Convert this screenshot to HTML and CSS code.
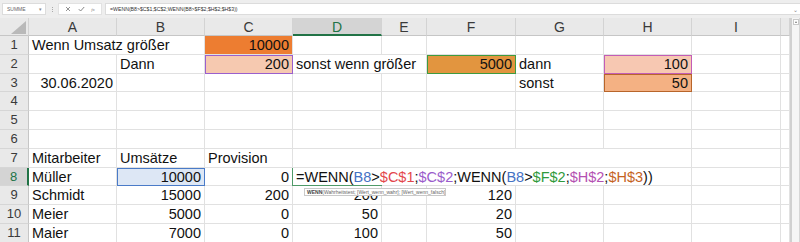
FILE: index.html
```html
<!DOCTYPE html>
<html lang="de">
<head>
<meta charset="utf-8">
<title>Excel WENN</title>
<link rel="stylesheet" href="styles.css">
</head>
<body>
<div class="app">
  <div class="fbar">
    <div class="namebox"><span>SUMME</span><span class="dd">&#9662;</span></div>
    <div class="sep"><i></i><i></i><i></i></div>
    <div class="icons">
      <svg class="ic" width="6" height="6" viewBox="0 0 6 6"><path d="M1 1L5 5M5 1L1 5" stroke="#777" stroke-width="0.8" fill="none"/></svg>
      <svg class="ic" width="7" height="6" viewBox="0 0 7 6"><path d="M0.8 3.2L2.6 5L6.2 1" stroke="#777" stroke-width="0.9" fill="none"/></svg>
      <span class="fx">fx</span>
    </div>
    <div class="formula"><span>=WENN(B8&gt;$C$1;$C$2;WENN(B8&gt;$F$2;$H$2;$H$3))</span><span class="exp">&#8964;</span></div>
  </div>
  <div class="main">
    <div class="sheet">
      <div class="ch corner"></div><div class="ch">A</div><div class="ch">B</div><div class="ch">C</div><div class="ch sel">D</div><div class="ch">E</div><div class="ch">F</div><div class="ch">G</div><div class="ch">H</div><div class="ch">I</div><div class="ch"></div>

      <div class="rh">1</div><div class="c s2">Wenn Umsatz größer</div><div class="c n f-c1">10000</div><div class="c"></div><div class="c"></div><div class="c"></div><div class="c"></div><div class="c"></div><div class="c"></div><div class="c"></div>

      <div class="rh">2</div><div class="c"></div><div class="c">Dann</div><div class="c n f-c2">200</div><div class="c s2">sonst wenn größer</div><div class="c n f-f2">5000</div><div class="c">dann</div><div class="c n f-h2">100</div><div class="c"></div><div class="c"></div>

      <div class="rh">3</div><div class="c n">30.06.2020</div><div class="c"></div><div class="c"></div><div class="c"></div><div class="c"></div><div class="c"></div><div class="c">sonst</div><div class="c n f-h3">50</div><div class="c"></div><div class="c"></div>

      <div class="rh">4</div><div class="c"></div><div class="c"></div><div class="c"></div><div class="c"></div><div class="c"></div><div class="c"></div><div class="c"></div><div class="c"></div><div class="c"></div><div class="c"></div>

      <div class="rh">5</div><div class="c"></div><div class="c"></div><div class="c"></div><div class="c"></div><div class="c"></div><div class="c"></div><div class="c"></div><div class="c"></div><div class="c"></div><div class="c"></div>

      <div class="rh">6</div><div class="c"></div><div class="c"></div><div class="c"></div><div class="c"></div><div class="c"></div><div class="c"></div><div class="c"></div><div class="c"></div><div class="c"></div><div class="c"></div>

      <div class="rh">7</div><div class="c">Mitarbeiter</div><div class="c">Umsätze</div><div class="c">Provision</div><div class="c s5"></div><div class="c"></div><div class="c"></div>

      <div class="rh sel">8</div><div class="c">Müller</div><div class="c n f-b8">10000</div><div class="c n">0</div><div class="c s5 edit">=WENN(<span class="r-b8">B8</span>&gt;<span class="r-c1">$C$1</span>;<span class="r-c2">$C$2</span>;WENN(<span class="r-b8">B8</span>&gt;<span class="r-f2">$F$2</span>;<span class="r-h2">$H$2</span>;<span class="r-h3">$H$3</span>))<div class="tip"><b>WENN</b>(Wahrheitstest; [Wert_wenn_wahr]; [Wert_wenn_falsch])</div></div><div class="c"></div><div class="c"></div>

      <div class="rh">9</div><div class="c">Schmidt</div><div class="c n">15000</div><div class="c n">200</div><div class="c n">200</div><div class="c"></div><div class="c n">120</div><div class="c"></div><div class="c"></div><div class="c"></div><div class="c"></div>

      <div class="rh">10</div><div class="c">Meier</div><div class="c n">5000</div><div class="c n">0</div><div class="c n">50</div><div class="c"></div><div class="c n">20</div><div class="c"></div><div class="c"></div><div class="c"></div><div class="c"></div>

      <div class="rh">11</div><div class="c">Maier</div><div class="c n">7000</div><div class="c n">0</div><div class="c n">100</div><div class="c"></div><div class="c n">50</div><div class="c"></div><div class="c"></div><div class="c"></div><div class="c"></div>
    </div>
    <div class="vscroll"><div class="up"></div></div>
  </div>
</div>
</body>
</html>
```
FILE: styles.css
```css
* { box-sizing: border-box; }
body {
  margin: 0;
  background: #fff;
  font-family: "Liberation Sans", Arial, sans-serif;
  overflow: hidden;
}
.app { width: 800px; height: 242px; overflow: hidden; }

/* formula bar */
.fbar {
  height: 18px;
  background: #eeeeee;
  display: flex;
  align-items: flex-start;
  padding: 3px 0 0 2px;
}
.namebox {
  width: 44px;
  height: 12px;
  background: #fff;
  border: 1px solid #dcdcdc;
  display: flex;
  align-items: center;
  justify-content: space-between;
  padding: 0 3px 0 4px;
  font-size: 5px;
  color: #666;
}
.namebox .dd { font-size: 5px; color: #888; }
.sep {
  width: 12px;
  height: 12px;
  display: flex;
  flex-direction: column;
  align-items: center;
  justify-content: center;
  gap: 1px;
}
.sep i { display: block; width: 1px; height: 1px; background: #aaa; }
.icons {
  width: 44px;
  height: 12px;
  background: #fff;
  border: 1px solid #e2e2e2;
  display: flex;
  align-items: center;
  justify-content: space-around;
  padding: 0 3px;
}
.fx { font-size: 5px; font-style: italic; color: #888; font-family: "Liberation Serif", serif; }
.formula {
  flex: 1;
  margin-left: 3px;
  height: 12px;
  background: #fff;
  border: 1px solid #dcdcdc;
  border-right: none;
  display: flex;
  justify-content: space-between;
  align-items: center;
  padding: 0 2px 0 4px;
  font-size: 5.2px;
  color: #333;
  white-space: nowrap;
}
.formula .exp { font-size: 6px; color: #888; }

/* sheet */
.main { display: flex; height: 224px; }
.sheet {
  width: 790px;
  display: grid;
  grid-template-columns: 29px 88px 88px 88px 89px 45px 89px 88px 88px 89px 9px;
  grid-template-rows: 18px repeat(11, 18.8px);
}
.c {
  border-right: 1px solid #e1e1e1;
  border-bottom: 1px solid #e1e1e1;
  font-size: 14.5px;
  line-height: 18px;
  padding: 0 3px;
  white-space: nowrap;
  overflow: hidden;
  color: #111;
}
.n { text-align: right; }
.s2 { grid-column: span 2; }
.s5 { grid-column: span 5; }

.ch {
  background: #e9e9e9;
  border-right: 1px solid #d3d3d3;
  border-bottom: 1px solid #c6c6c6;
  text-align: center;
  font-size: 14px;
  line-height: 18px;
  color: #3a3a3a;
}
.ch.sel {
  background: #d4d4d4;
  color: #217346;
  border-bottom: 2px solid #217346;
}
.corner { position: relative; }
.corner::after {
  content: "";
  position: absolute;
  right: 2px;
  bottom: 1px;
  width: 15px;
  height: 13px;
  background: #b9b9b9;
  clip-path: polygon(100% 0, 100% 100%, 0 100%);
}
.rh {
  background: #e9e9e9;
  border-right: 1px solid #c6c6c6;
  border-bottom: 1px solid #d6d6d6;
  text-align: center;
  font-size: 13px;
  line-height: 18px;
  color: #3a3a3a;
}
.rh.sel {
  background: #d4d4d4;
  color: #217346;
  border-right: 2px solid #217346;
}

/* filled / referenced cells */
.f-c1 { background: #ed7d31; }
.f-c2 { background: #f6c9b0; outline: 1px solid #9a5fcd; outline-offset: -1px; }
.f-f2 { background: #e2953f; outline: 1px solid #3e9b40; outline-offset: -1px; }
.f-h2 { background: #f7c8b2; outline: 1px solid #c35cb6; outline-offset: -1px; }
.f-h3 { background: #f4b183; outline: 1px solid #b8652a; outline-offset: -1px; }
.f-b8 { background: #dde7f5; outline: 1px solid #4a7bc8; outline-offset: -1px; }

/* editing cell */
.edit { position: relative; overflow: visible; }
.edit::before {
  content: "";
  position: absolute;
  left: -1px;
  top: 0;
  width: 89px;
  height: 100%;
  border-left: 1px solid #4e9a68;
  border-bottom: 1px solid #4e9a68;
}
.r-b8 { color: #4472c4; }
.r-c1 { color: #e3464b; }
.r-c2 { color: #9a5ccb; }
.r-f2 { color: #2f9a3b; }
.r-h2 { color: #b450b2; }
.r-h3 { color: #c5631f; }
.tip {
  position: absolute;
  left: 11px;
  top: 20px;
  width: 142px;
  height: 8px;
  background: #fff;
  border: 1px solid #c9c9c9;
  font-size: 5px;
  line-height: 6px;
  color: #666;
  padding: 0 2px;
  z-index: 2;
  white-space: nowrap;
  overflow: hidden;
}
.tip b { color: #444; }

/* scrollbar */
.vscroll {
  width: 10px;
  background: #f5f5f5;
  border-left: 2px solid #d0d0d0;
  border-right: 1px solid #d6d6d6;
  padding: 1px 0 0 1px;
}
.up {
  width: 6px;
  height: 6px;
  background: #fff;
  border: 1px solid #c8c8c8;
  position: relative;
}
.up::after {
  content: "";
  position: absolute;
  left: 1px;
  top: 1px;
  border-left: 1px solid transparent;
  border-right: 1px solid transparent;
  border-bottom: 2px solid #777;
}
```
